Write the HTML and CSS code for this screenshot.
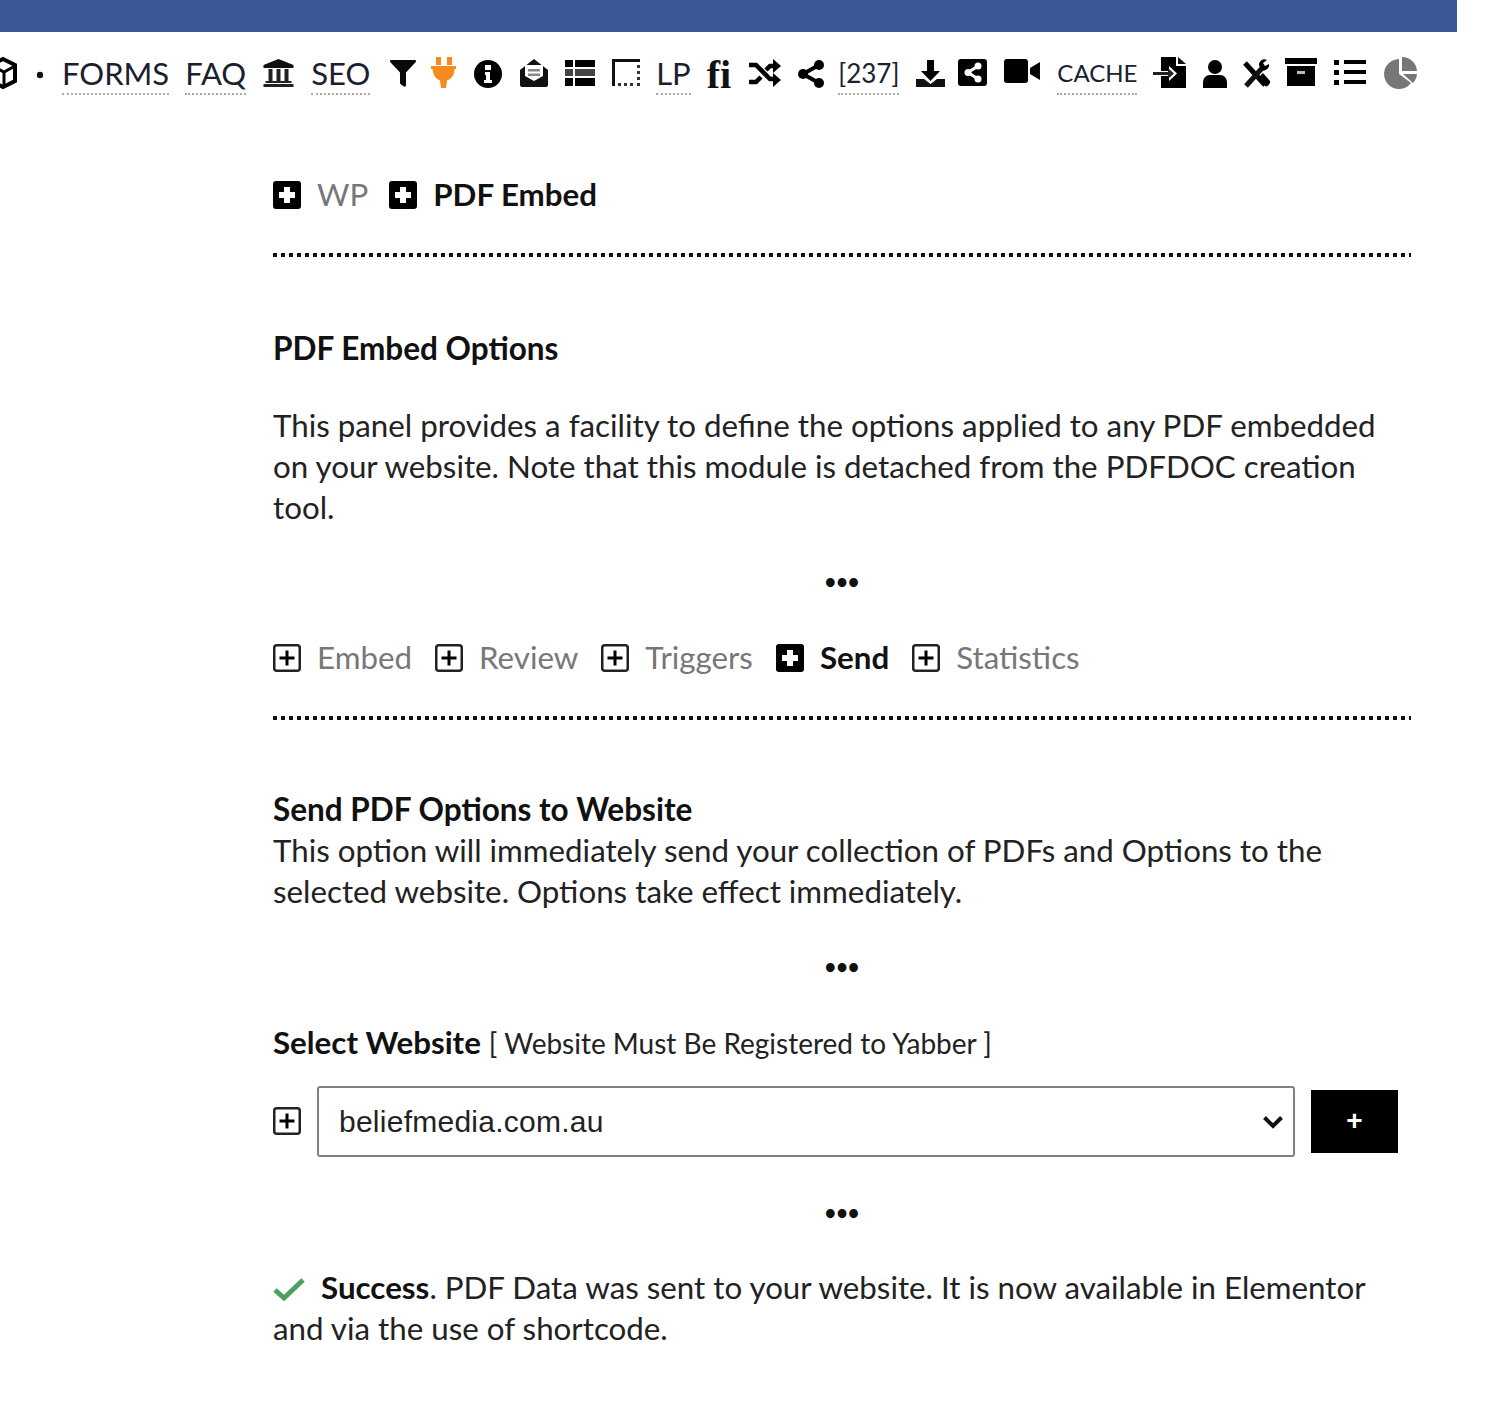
FILE: index.html
```html
<!DOCTYPE html>
<html lang="en">
<head>
<meta charset="utf-8">
<title>PDF Embed Options</title>
<link rel="stylesheet" href="styles.css">
</head>
<body>
<header class="topbar"></header>
<nav class="toolbar">
  <svg class="ico" width="27" height="31" viewBox="0 0 27 31"><path d="M13 2 25 8v16l-12 6-12-6V8z" fill="none" stroke="#000" stroke-width="4"/><path d="M2 9l12 6 11-6M14 15v14" fill="none" stroke="#000" stroke-width="3"/></svg>
  <svg class="ico" width="13" height="31" viewBox="0 0 13 31"><circle cx="7" cy="18" r="3.200" fill="#111"/></svg>
  <span class="nav-text">FORMS</span>
  <span class="nav-text">FAQ</span>
  <svg class="ico" width="33" height="31" viewBox="-1.500 0 33 31"><path d="M15 2 30 8v3H0V8z" fill="#111"/><path d="M0 27h30v3H0z" fill="#222"/><path d="M5 12h4v12H5zM13 12h4v12h-4zM21 12h4v12h-4zM2 24h26v2H2z" fill="#222"/></svg>
  <span class="nav-text">SEO</span>
  <svg class="ico" width="28" height="31" viewBox="-4 0 28 31"><path d="M1 3h24c1 0 1.500 1 .8 2L16 15.500V28c0 1.500-1 2-2 1.500l-3-2c-.6-.4-1-.9-1-1.500V15.500L.2 5C-.5 4 0 3 1 3z" fill="#0a0a0a"/></svg>
  <svg class="ico" width="28" height="31" viewBox="-1 0 28 31"><path d="M5 0h5v8H5zM16 0h5v8h-5z" fill="#f68b1f"/><path d="M0 9h25v3h-1.500c0 6-3 10-7.500 11.500l-1 7.500h-5l-1-7.500C5 22 2 18 1.500 12H0z" fill="#f68b1f"/></svg>
  <svg class="ico" width="29" height="31" viewBox="0 0 29 31"><circle cx="14" cy="17" r="14" fill="#000"/><path d="M11 8h6v5h-6zM11 15h5v8h2v3H10v-3h2v-5h-1z" fill="#fff"/></svg>
  <svg class="ico" width="30" height="31" viewBox="0 0 30 31"><path d="M15 2 29 13v15c0 1-1 2-2 2H3c-1 0-2-1-2-2V13z" fill="#111"/><path d="M6 8h18v11l-9 5-9-5z" fill="#fff"/><path d="M9 12h12v2.500H9zM9 16.500h12V19H9z" fill="#888"/></svg>
  <svg class="ico" width="30" height="31" viewBox="0 0 30 31"><path d="M0 3h8v7H0zM10 3h20v7H10zM0 21h8v8H0zM10 21h20v8H10z" fill="#000"/><path d="M0 12h8v7H0zM10 12h20v7H10z" fill="#444"/></svg>
  <svg class="ico" width="29" height="31" viewBox="0 0 29 31"><path d="M1 2h28v3H4v24H1z" fill="#111"/><path d="M26 8h3v3h-3zM26 14h3v3h-3zM26 20h3v3h-3zM26 26h3v3h-3zM7 26h3v3H7zM13 26h3v3h-3zM19 26h3v3h-3z" fill="#333"/></svg>
  <span class="nav-text">LP</span>
  <span class="serif-fi">fi</span>
  <svg class="ico" width="35" height="31" viewBox="-2 0 35 31"><path d="M0 8h7l14 14h4M0 25h7l5-5M17 13l4-4h4" fill="none" stroke="#000" stroke-width="4.500"/><path d="M24 2l8 7-8 7zM24 16l8 7-8 7z" fill="#000"/></svg>
  <svg class="ico" width="24" height="31" viewBox="0 0 24 31"><path d="M21 8 5 17l16 9" fill="none" stroke="#000" stroke-width="4"/><circle cx="21" cy="8" r="5" fill="#000"/><circle cx="5" cy="17" r="5" fill="#000"/><circle cx="21" cy="26" r="5" fill="#000"/></svg>
  <span class="nav-text nav-count">[237]</span>
  <svg class="ico" width="27" height="31" viewBox="-1 0 27 31"><path d="M11 3h7v11h6L14.500 24 5 14h6z" fill="#000"/><path d="M0 22h8l6.500 5 6.500-5h8v8H0z" fill="#111"/></svg>
  <svg class="ico" width="30" height="31" viewBox="0 0 30 31"><rect y="2" width="29" height="27" rx="3" fill="#000"/><path d="M20 9 10 15.500 20 22" fill="none" stroke="#fff" stroke-width="3"/><circle cx="20" cy="9" r="3.500" fill="#fff"/><circle cx="10" cy="15.500" r="3.500" fill="#fff"/><circle cx="20" cy="22" r="3.500" fill="#fff"/></svg>
  <svg class="ico" width="37" height="31" viewBox="0 0 37 31"><rect y="2" width="24" height="24" rx="3" fill="#000"/><path d="M26 11l10-6v18l-10-6z" fill="#000"/></svg>
  <span class="nav-text nav-cache">CACHE</span>
  <svg class="ico" width="34" height="31" viewBox="0 0 34 31"><path d="M8 0h15v9h10v22H8z" fill="#000"/><path d="M25 0l8 7h-8z" fill="#111"/><path d="M7 14h9v-5l8 7.500-8 7.500v-5H7z" fill="#fff"/><path d="M0 15h17v3H0z" fill="#222"/><path d="M15 11l6 5.500-6 5.500z" fill="#222"/></svg>
  <svg class="ico" width="23" height="31" viewBox="0 0 23 31"><circle cx="12" cy="10" r="7" fill="#000"/><path d="M0 31v-5c0-5 3-8 7-8h10c4 0 7 3 7 8v5z" fill="#000"/></svg>
  <svg class="ico" width="27" height="31" viewBox="0 0 27 31"><path d="M3 6l20 22" stroke="#000" stroke-width="5" fill="none"/><path d="M4 29 22 9" stroke="#111" stroke-width="5" fill="none"/><path d="M17 8c0-4 4-7 8-5l-4 3 2 3 4-2c1 4-4 8-8 6z" fill="#000"/><path d="M16 21l5-5 7 8c1 2-3 7-5 5z" fill="#000"/></svg>
  <svg class="ico" width="32" height="31" viewBox="0 0 32 31"><path d="M0 1h32v6H0z" fill="#000"/><path d="M2 9h28v20H2z" fill="#000"/><path d="M12 14h8v3h-8z" fill="#bbb"/></svg>
  <svg class="ico" width="34" height="31" viewBox="0 0 34 31"><path d="M1 3h5v5H1zM1 13h5v5H1zM1 23h5v5H1z" fill="#000"/><path d="M11 3h22v4H11zM11 13h22v4H11zM11 23h22v4H11z" fill="#000"/></svg>
  <svg class="ico" width="34" height="31" viewBox="0 0 34 31"><path d="M16 2A15 15 0 1 0 28 26L16 17z" fill="#777"/><path d="M19 0A15 15 0 0 1 34 14H19z" fill="#777"/><path d="M20 17H34A15 15 0 0 1 30 26z" fill="#777"/></svg>
</nav>

<main class="content">
  <div class="tabs tabs-first">
    <span class="tab"><svg class="tab-ico" width="28" height="28" viewBox="0 0 28 28"><use href="#plus-solid"/></svg><span class="muted">WP</span></span>
    <span class="tab"><svg class="tab-ico" width="28" height="28" viewBox="0 0 28 28"><use href="#plus-solid"/></svg><strong>PDF Embed</strong></span>
  </div>
  <div class="rule"></div>

  <h2 class="heading heading-first">PDF Embed Options</h2>
  <p class="para para-gap">This panel provides a facility to define the options applied to any PDF embedded on your website. Note that this module is detached from the PDFDOC creation tool.</p>
  <div class="dots">•••</div>

  <div class="tabs tabs-second">
    <span class="tab"><svg class="tab-ico" width="28" height="28" viewBox="0 0 28 28"><use href="#plus-line"/></svg><span class="muted">Embed</span></span>
    <span class="tab"><svg class="tab-ico" width="28" height="28" viewBox="0 0 28 28"><use href="#plus-line"/></svg><span class="muted">Review</span></span>
    <span class="tab"><svg class="tab-ico" width="28" height="28" viewBox="0 0 28 28"><use href="#plus-line"/></svg><span class="muted">Triggers</span></span>
    <span class="tab"><svg class="tab-ico" width="28" height="28" viewBox="0 0 28 28"><use href="#plus-solid"/></svg><strong>Send</strong></span>
    <span class="tab"><svg class="tab-ico" width="28" height="28" viewBox="0 0 28 28"><use href="#plus-line"/></svg><span class="muted">Statistics</span></span>
  </div>
  <div class="rule"></div>

  <h2 class="heading heading-second">Send PDF Options to Website</h2>
  <p class="para">This option will immediately send your collection of PDFs and Options to the selected website. Options take effect immediately.</p>
  <div class="dots dots-wide">•••</div>

  <div class="select-label"><strong>Select Website</strong> <span class="hint">[ Website Must Be Registered to Yabber ]</span></div>
  <form class="site-row">
    <svg class="tab-ico" width="28" height="28" viewBox="0 0 28 28"><use href="#plus-line"/></svg>
    <div class="select-wrap">
      <select class="site-select"><option>beliefmedia.com.au</option></select>
      <svg class="chevron" width="22" height="14" viewBox="0 0 22 14"><path d="M2.500 2.500 11 11l8.500-8.500" fill="none" stroke="#111" stroke-width="4"/></svg>
    </div>
    <button class="add-btn" type="button">+</button>
  </form>
  <div class="dots dots-tight">•••</div>

  <p class="para success"><svg class="check" width="32" height="24" viewBox="0 0 32 24"><path d="M2 13l9 8L30 3" fill="none" stroke="#4f9f63" stroke-width="5"/></svg><strong>Success</strong>. PDF Data was sent to your website. It is now available in Elementor and via the use of shortcode.</p>
</main>

<svg class="defs" width="0" height="0">
  <defs>
    <g id="plus-solid"><rect width="28" height="28" rx="3" fill="#000"/><path d="M11 6h6v5h5v6h-5v5h-6v-5H6v-6h5z" fill="#fff"/></g>
    <g id="plus-line"><rect x="1.250" y="1.250" width="25.500" height="25.500" rx="2.500" fill="none" stroke="#222" stroke-width="2.500"/><path d="M12.500 6.500h3v6h6v3h-6v6h-3v-6h-6v-3h6z" fill="#000"/></g>
  </defs>
</svg>
</body>
</html>
```

FILE: styles.css
```css
html, body { margin: 0; padding: 0; background: #fff; }
body {
  width: 1500px;
  height: 1404px;
  overflow: hidden;
  font-family: "Lato", "Carlito", sans-serif;
  font-size: 31.3px;
  line-height: 41px;
  color: #222;
}
.topbar { width: 1457px; height: 32px; background: #3b5998; }
.toolbar {
  display: flex;
  align-items: flex-start;
  gap: 16px;
  margin-left: -10px;
  padding-top: 25px;
  height: 39px;
  white-space: nowrap;
}
.ico { display: block; flex: none; overflow: visible; }
.nav-text {
  display: block;
  font-size: 31px;
  line-height: 32px;
  padding-bottom: 4px;
  border-bottom: 2px dotted #aaa;
  color: #1a2030;
}
.nav-count { font-size: 26px; }
.nav-cache { font-size: 24px; }
.serif-fi {
  padding-top: 2px;
  font-family: "Liberation Serif", serif;
  font-weight: 700;
  font-size: 40px;
  line-height: 32px;
  color: #111;
}
.content { margin-left: 273px; width: 1138px; padding-top: 78px; }
.tabs { display: flex; gap: 23px; height: 41px; align-items: center; }
.tabs-first { gap: 21px; }
.tab { display: flex; align-items: center; gap: 16px; }
.tab-ico { display: block; flex: none; }
.muted { color: #777; }
strong { font-weight: 700; color: #111; }
.rule {
  height: 4px;
  margin-top: 38px;
  background: repeating-linear-gradient(90deg, #111 0 4px, transparent 4px 8px);
}
.heading { margin: 0; font-size: 31.5px; line-height: 41px; font-weight: 700; color: #111; }
.heading-first { margin-top: 71px; }
.heading-second { margin-top: 69px; }
.para { margin: 0; }
.para-gap { margin-top: 36px; }
.dots {
  margin-top: 33px;
  text-align: center;
  font-size: 20px;
  line-height: 41px;
  font-weight: 700;
  color: #111;
}
.dots-wide { margin-top: 34px; }
.tabs-second { margin-top: 35px; }
.select-label { margin-top: 35px; }
.hint { font-size: 28px; }
.site-row { display: flex; align-items: center; margin-top: 22px; height: 70px; }
.select-wrap { position: relative; flex: none; margin-left: 16px; height: 71px; }
.site-select {
  display: block;
  width: 978px;
  height: 71px;
  padding: 0 20px;
  appearance: none;
  font-family: "Liberation Sans", sans-serif;
  font-size: 30px;
  letter-spacing: .25px;
  color: #222;
  background: #fff;
  border: 2px solid #808080;
  border-radius: 3px;
}
.chevron { position: absolute; right: 11px; top: 29px; pointer-events: none; }
.add-btn {
  width: 87px;
  height: 63px;
  margin-left: 16px;
  border: 0;
  background: #000;
  color: #fff;
  font-family: "Liberation Sans", sans-serif;
  font-size: 28px;
  font-weight: 700;
}
.dots-tight { margin-top: 36px; }
.success { margin-top: 34px; }
.check { vertical-align: -2px; margin-right: 16px; }
.defs { position: absolute; }
```
